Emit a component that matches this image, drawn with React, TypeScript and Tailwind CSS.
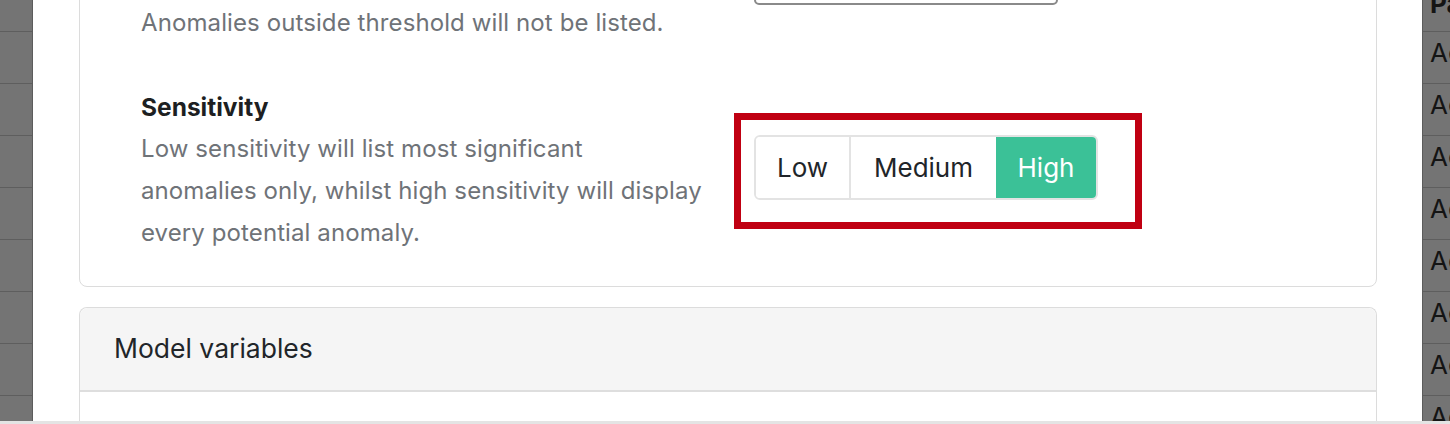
import React from 'react'

const rows = Array.from({ length: 9 })

function Backdrop({ side }: { side: 'left' | 'right' }) {
    if (side === 'left') {
        return (
            <div className="w-[33px] shrink-0 bg-[#747474] border-r border-[#5c5c5c] flex flex-col -mt-[20px]">
                {rows.map((_, i) => (
                    <div key={i} className="h-[52px] shrink-0 border-b border-[#5e5e5e]" />
                ))}
            </div>
        )
    }
    return (
        <div className="w-[28px] shrink-0 bg-[#747474] border-l border-[#5c5c5c] flex flex-col -mt-[20px] overflow-hidden">
            <div className="h-[52px] shrink-0 border-b border-[#5e5e5e] pl-[7px] pt-[9px] text-[26px] leading-[30px] font-bold text-[#141414] whitespace-nowrap">Pa</div>
            {rows.slice(1).map((_, i) => (
                <div key={i} className="h-[52px] shrink-0 border-b border-[#5e5e5e] pl-[7px] pt-[1px] text-[26px] leading-[40px] text-[#141414] whitespace-nowrap">
                    Ac
                </div>
            ))}
        </div>
    )
}

export default function App() {
    const levels = ['Low', 'Medium', 'High']
    const active = 'High'

    return (
        <div className="relative w-[1450px] h-[424px] overflow-hidden flex bg-white font-['Inter',sans-serif]">
            <Backdrop side="left" />

            {/*Modal body*/}
            <div className="flex-1 flex flex-col pl-[46px] pr-[45px]">

                {/*Anomaly settings*/}
                <div className="-mt-[60px] rounded-lg border border-[#dcdcdc] bg-white pl-[61px] pb-[32px]">
                    <div className="flex">
                        <div className="w-[613px] pt-[61px]">
                            <p className="text-[24px] leading-[42px] text-[#6f7378] tracking-[0.1px]">Anomalies outside threshold will not be listed.</p>
                        </div>
                        <div className="w-[304px] h-[40px] mt-[24px] rounded-[5px] border-2 border-[#8a8a8a]" />
                    </div>

                    <div className="flex mt-[42px]">
                        <div className="w-[613px]">
                            <h3 className="text-[24.5px] leading-[42px] font-bold text-[#1d1f22]">Sensitivity</h3>
                            <p className="text-[24px] leading-[42px] text-[#6f7378] tracking-[0.1px]">
                                Low sensitivity will list most significant
                                <br />
                                anomalies only, whilst high sensitivity will display
                                <br />
                                every potential anomaly.
                            </p>
                        </div>

                        <div className="relative mt-[49px] self-start">
                            <div className="flex h-[65px] rounded-[6px] border-2 border-[#e3e3e3] overflow-hidden">
                                {levels.map((l, i) => (
                                    <div
                                        key={l}
                                        className={`flex items-center justify-center text-[26px] ${i === 0 ? 'w-[93px]' : i === 1 ? 'w-[147px] border-l-2 border-[#e3e3e3]' : 'w-[100px]'} ${l === active ? 'bg-[#3bc197] text-white' : 'bg-white text-[#212529]'}`}
                                    >
                                        {l}
                                    </div>
                                ))}
                            </div>
                            {/*Highlight*/}
                            <div className="absolute -left-[20px] -top-[22px] w-[408px] h-[116px] border-[7px] border-[#c00012]" />
                        </div>
                    </div>
                </div>

                {/*Model variables*/}
                <div className="mt-[20px] flex-1 rounded-t-lg border border-b-0 border-[#dcdcdc]">
                    <div className="h-[84px] flex items-center pl-[34px] bg-[#f5f5f5] border-b-2 border-[#dedede] rounded-t-lg">
                        <h2 className="text-[26.5px] text-[#212529]">Model variables</h2>
                    </div>
                </div>
            </div>

            <Backdrop side="right" />

            <div className="absolute bottom-0 left-0 right-0 h-[3px] bg-[#e4e4e4]" />
        </div>
    )
}
